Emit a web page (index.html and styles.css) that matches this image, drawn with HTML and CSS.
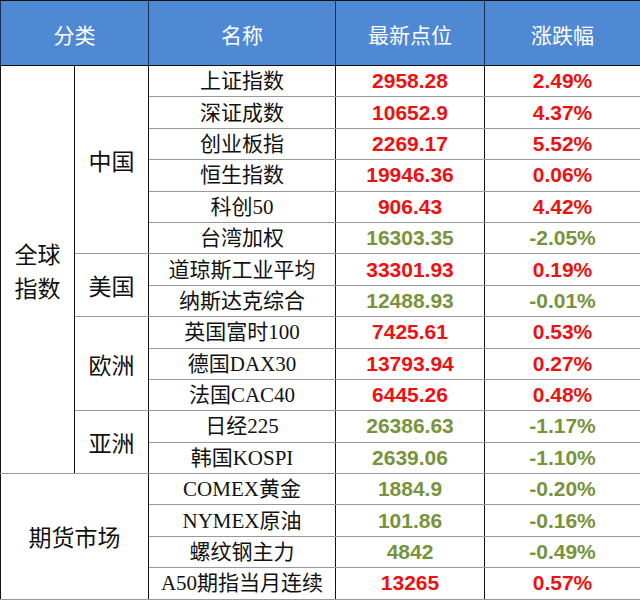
FILE: index.html
```html
<!DOCTYPE html>
<html lang="zh">
<head>
<meta charset="utf-8">
<link rel="stylesheet" href="styles.css">
</head>
<body>
<table class="quotes">
  <colgroup>
    <col class="c1"><col class="c2"><col class="c3"><col class="c4"><col class="c5">
  </colgroup>
  <thead>
    <tr class="head">
      <th colspan="2">分类</th>
      <th>名称</th>
      <th>最新点位</th>
      <th>涨跌幅</th>
    </tr>
  </thead>
  <tbody>
    <tr>
      <td rowspan="13" class="cat wrap">全球<br>指数</td>
      <td rowspan="6" class="sub">中国</td>
      <td class="name">上证指数</td><td class="num up">2958.28</td><td class="num up">2.49%</td>
    </tr>
    <tr><td class="name">深证成数</td><td class="num up">10652.9</td><td class="num up">4.37%</td></tr>
    <tr><td class="name">创业板指</td><td class="num up">2269.17</td><td class="num up">5.52%</td></tr>
    <tr><td class="name">恒生指数</td><td class="num up">19946.36</td><td class="num up">0.06%</td></tr>
    <tr><td class="name">科创50</td><td class="num up">906.43</td><td class="num up">4.42%</td></tr>
    <tr><td class="name">台湾加权</td><td class="num down">16303.35</td><td class="num down">-2.05%</td></tr>
    <tr>
      <td rowspan="2" class="sub">美国</td>
      <td class="name">道琼斯工业平均</td><td class="num up">33301.93</td><td class="num up">0.19%</td>
    </tr>
    <tr><td class="name">纳斯达克综合</td><td class="num down">12488.93</td><td class="num down">-0.01%</td></tr>
    <tr>
      <td rowspan="3" class="sub">欧洲</td>
      <td class="name">英国富时100</td><td class="num up">7425.61</td><td class="num up">0.53%</td>
    </tr>
    <tr><td class="name">德国DAX30</td><td class="num up">13793.94</td><td class="num up">0.27%</td></tr>
    <tr><td class="name">法国CAC40</td><td class="num up">6445.26</td><td class="num up">0.48%</td></tr>
    <tr>
      <td rowspan="2" class="sub">亚洲</td>
      <td class="name">日经225</td><td class="num down">26386.63</td><td class="num down">-1.17%</td>
    </tr>
    <tr><td class="name">韩国KOSPI</td><td class="num down">2639.06</td><td class="num down">-1.10%</td></tr>
    <tr>
      <td rowspan="4" colspan="2" class="cat">期货市场</td>
      <td class="name">COMEX黄金</td><td class="num down">1884.9</td><td class="num down">-0.20%</td>
    </tr>
    <tr><td class="name">NYMEX原油</td><td class="num down">101.86</td><td class="num down">-0.16%</td></tr>
    <tr><td class="name">螺纹钢主力</td><td class="num down">4842</td><td class="num down">-0.49%</td></tr>
    <tr><td class="name">A50期指当月连续</td><td class="num up">13265</td><td class="num up">0.57%</td></tr>
  </tbody>
</table>
</body>
</html>
```
FILE: styles.css
```css
html, body {
  margin: 0;
  padding: 0;
  background: #ffffff;
}

.quotes {
  border-collapse: collapse;
  table-layout: fixed;
  width: 640px;
  border: 1px solid #111;
  font-family: "Liberation Serif", "Noto Sans CJK SC", serif;
  color: #111;
}

.c1 { width: 74px; }
.c2 { width: 74px; }
.c3 { width: 187px; }
.c4 { width: 149px; }
.c5 { width: 156px; }

.quotes th,
.quotes td {
  padding: 0;
  text-align: center;
  vertical-align: middle;
  border-left: 1px solid #111;
  border-right: 1px solid #111;
  border-top: 1px solid #999;
  border-bottom: 1px solid #999;
  overflow: hidden;
  white-space: nowrap;
}

.head {
  height: 65px;
}

.head th {
  background: #4f88d3;
  color: #ffffff;
  font-family: "Noto Sans CJK SC", sans-serif;
  font-weight: 400;
  font-size: 21px;
  padding-top: 2px;
  border-top: 1px solid #111;
  border-bottom: 1px solid #111;
  border-left: 1px solid #1b2f55;
  border-right: 1px solid #1b2f55;
}

.quotes tbody tr {
  height: 31.4px;
}

.cat {
  font-family: "Noto Sans CJK SC", sans-serif;
  font-size: 23px;
  line-height: 34px;
}

.sub {
  font-family: "Noto Sans CJK SC", sans-serif;
  font-size: 23px;
}

.name {
  font-size: 21px;
  line-height: 24px;
}

.num {
  font-family: "Liberation Sans", Arial, sans-serif;
  font-weight: 700;
  font-size: 21px;
}

.up { color: #ee1111; }
.down { color: #77933c; }
```
